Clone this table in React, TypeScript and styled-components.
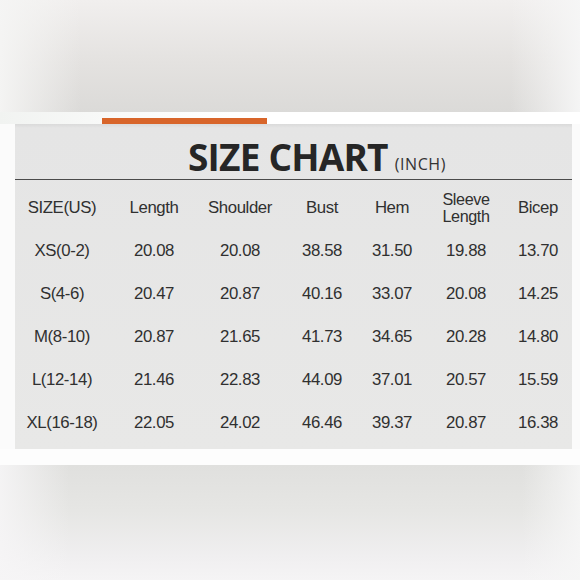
import styled, { createGlobalStyle } from "styled-components";

const GlobalStyle = createGlobalStyle`
  html, body {
    margin: 0;
    padding: 0;
    background: #ffffff;
  }
  * {
    box-sizing: border-box;
  }
`;

const Page = styled.div`
  width: 580px;
  height: 580px;
  display: flex;
  flex-direction: column;
  overflow: hidden;
  background: #fdfdfd;
`;

const TopBlur = styled.div`
  height: 112px;
  flex-shrink: 0;
  background:
    linear-gradient(90deg, rgba(245, 245, 244, 0.95) 0%, rgba(245, 245, 244, 0) 14%, rgba(245, 245, 244, 0) 88%, rgba(246, 246, 246, 0.95) 100%),
    linear-gradient(180deg, #f1efee 0%, #e4e2e0 55%, #dbdad8 100%);
`;

const Strip = styled.div`
  height: 12px;
  flex-shrink: 0;
  display: flex;
  align-items: flex-end;
  background: linear-gradient(90deg, #f1f3f1 0%, #f8f9f8 18%, #ffffff 40%, #ffffff 100%);
`;

const AccentBar = styled.div`
  margin-left: 102px;
  width: 165px;
  height: 6px;
  background: #d8652a;
`;

const PanelRow = styled.div`
  display: flex;
  padding: 0 8px 0 15px;
  flex-shrink: 0;
  background: #fbfbfb;
`;

const Panel = styled.div`
  flex: 1;
  height: 325px;
  background: linear-gradient(180deg, #dadada 0px, #e5e5e5 4px, #e8e8e7 100%);
  display: flex;
  flex-direction: column;
`;

const TitleRow = styled.div`
  height: 56px;
  display: flex;
  align-items: flex-end;
  padding-left: 173px;
  padding-bottom: 4px;
  border-bottom: 1.5px solid #4a4a4a;
  color: #262626;
`;

const Title = styled.span`
  font-family: "Open Sans", "Liberation Sans", sans-serif;
  font-weight: 700;
  font-size: 37px;
  line-height: 37px;
  letter-spacing: -0.8px;
`;

const Unit = styled.span`
  font-family: "Open Sans", "Liberation Sans", sans-serif;
  font-weight: 400;
  font-size: 16px;
  line-height: 16px;
  letter-spacing: 0.6px;
  margin-left: 7px;
  margin-bottom: 3px;
  color: #333;
`;

const Table = styled.div`
  padding-top: 6px;
  display: flex;
  flex-direction: column;
`;

const Row = styled.div`
  display: grid;
  grid-template-columns: 94px 90px 82px 82px 58px 90px 54px;
  height: 43px;
  align-items: center;
  justify-items: center;
`;

const Cell = styled.div<{ $stack?: boolean }>`
  font-family: "Liberation Sans", Arial, sans-serif;
  font-size: ${(p) => (p.$stack ? "16.2px" : "16.8px")};
  line-height: ${(p) => (p.$stack ? "17px" : "20px")};
  letter-spacing: -0.4px;
  color: #303030;
  text-align: center;
  white-space: nowrap;
`;

const BottomBlur = styled.div`
  margin-top: 16px;
  flex: 1;
  background:
    linear-gradient(90deg, rgba(246, 245, 246, 0.9) 0%, rgba(246, 246, 246, 0) 12%, rgba(246, 246, 246, 0) 90%, rgba(246, 246, 246, 0.9) 100%),
    linear-gradient(180deg, #e0e0de 0%, #e6e6e4 40%, #f0eff0 80%, #f5f4f5 100%);
`;

const headers = ["SIZE(US)", "Length", "Shoulder", "Bust", "Hem", "Sleeve\nLength", "Bicep"];

const rows = [
  ["XS(0-2)", "20.08", "20.08", "38.58", "31.50", "19.88", "13.70"],
  ["S(4-6)", "20.47", "20.87", "40.16", "33.07", "20.08", "14.25"],
  ["M(8-10)", "20.87", "21.65", "41.73", "34.65", "20.28", "14.80"],
  ["L(12-14)", "21.46", "22.83", "44.09", "37.01", "20.57", "15.59"],
  ["XL(16-18)", "22.05", "24.02", "46.46", "39.37", "20.87", "16.38"],
];

export default function App() {
  return (
    <>
      <GlobalStyle />
      <Page>
        <TopBlur />
        <Strip>
          <AccentBar />
        </Strip>
        <PanelRow>
          <Panel>
            <TitleRow>
              <Title>SIZE CHART</Title>
              <Unit>(INCH)</Unit>
            </TitleRow>
            <Table>
              <Row>
                {headers.map((h) =>
                  h.includes("\n") ? (
                    <Cell key={h} $stack>
                      {h.split("\n").map((line) => (
                        <div key={line}>{line}</div>
                      ))}
                    </Cell>
                  ) : (
                    <Cell key={h}>{h}</Cell>
                  )
                )}
              </Row>
              {rows.map((r) => (
                <Row key={r[0]}>
                  {r.map((v, i) => (
                    <Cell key={i}>{v}</Cell>
                  ))}
                </Row>
              ))}
            </Table>
          </Panel>
        </PanelRow>
        <BottomBlur />
      </Page>
    </>
  );
}
